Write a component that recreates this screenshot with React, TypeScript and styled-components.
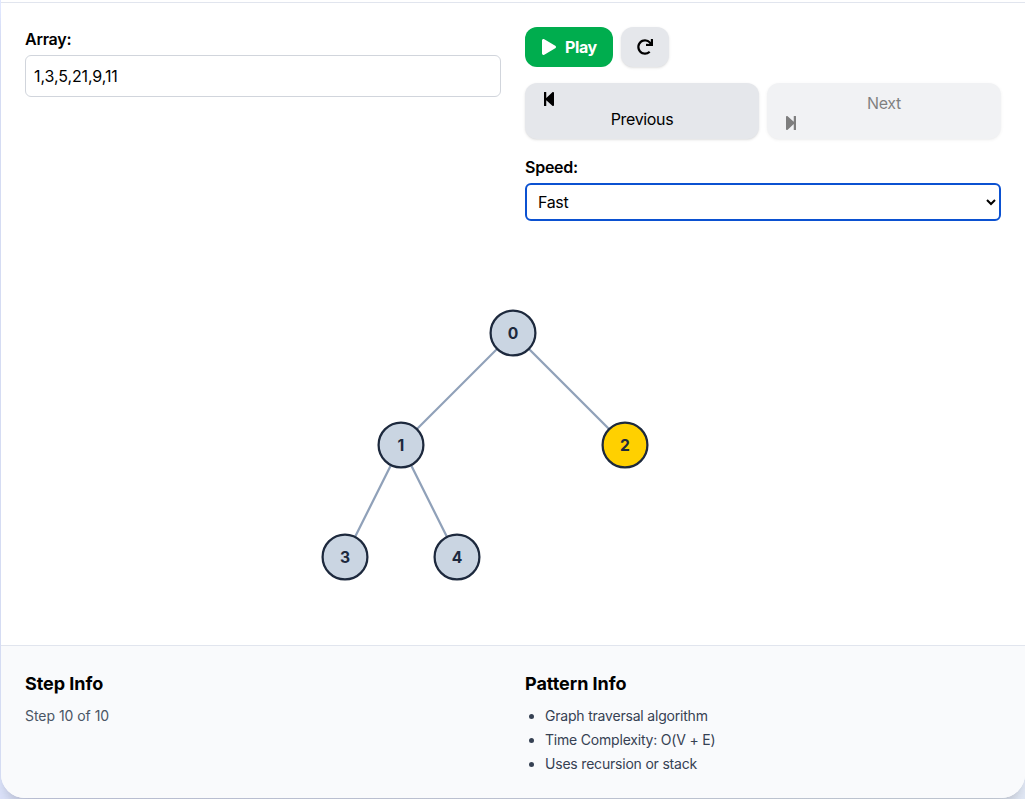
import React from "react";
import styled, { createGlobalStyle, css } from "styled-components";
import { FaPlay, FaRedo, FaStepBackward, FaStepForward } from "react-icons/fa";

const GlobalStyle = createGlobalStyle`
  *, *::before, *::after { box-sizing: border-box; }
  html, body { margin: 0; padding: 0; }
  body {
    overflow: hidden;
    background: linear-gradient(90deg, #e0e7ff, #e8effc);
    font-family: Inter, "Liberation Sans", sans-serif;
    font-size: 16px;
    line-height: 24px;
    color: #000;
  }
  svg { display: block; }
`;

const Page = styled.div`
  height: 799px;
  padding: 0 0 1px 1px;
  overflow: hidden;
`;

const Card = styled.main`
  display: flex;
  flex-direction: column;
  height: 798px;
  overflow: hidden;
  background: #fff;
  border-radius: 0 0 24px 24px;
  box-shadow: 0 20px 25px -5px rgba(0, 0, 0, 0.13), 0 8px 10px -6px rgba(0, 0, 0, 0.12);
`;

const HeaderEdge = styled.div`
  height: 3px;
  flex: none;
  border-bottom: 1px solid #e1e5ee;
`;

const Columns = styled.section`
  display: grid;
  grid-template-columns: 476px 476px;
  column-gap: 24px;
  padding: 24px;
`;

const Field = styled.div`
  display: flex;
  flex-direction: column;
  gap: 4px;
`;

const Label = styled.label`
  font-weight: 600;
  letter-spacing: -0.25px;
`;

const ArrayInput = styled.input`
  width: 100%;
  height: 42px;
  padding: 8px;
  border: 1px solid #d1d5dc;
  border-radius: 6px;
  background: #fff;
  font: inherit;
  letter-spacing: -0.1px;
  color: inherit;
  outline: none;
`;

const Controls = styled.div`
  display: flex;
  flex-direction: column;
  gap: 16px;
`;

const ButtonRow = styled.div`
  display: flex;
  gap: 8px;
`;

const Button = styled.button<{ $primary?: boolean; $wide?: boolean }>`
  display: flex;
  align-items: center;
  gap: 8px;
  padding: 8px 16px;
  min-height: 40px;
  border: 0;
  border-radius: 12px;
  font: inherit;
  color: #000;
  background: #e5e7eb;
  box-shadow: 0 1px 3px rgba(0, 0, 0, 0.1), 0 1px 2px -1px rgba(0, 0, 0, 0.1);

  ${({ $primary }) =>
    $primary &&
    css`
      width: 88px;
      color: #fff;
      font-weight: 700;
      letter-spacing: -0.4px;
      background: #00ad4e;
      box-shadow: none;
    `}

  ${({ $wide }) =>
    $wide &&
    css`
      flex: 1;
      flex-direction: column;
      align-items: stretch;
      gap: 0;
      text-align: center;
      letter-spacing: -0.35px;
    `}

  &:disabled {
    color: #000;
    opacity: 0.5;
  }
`;

const SpeedSelect = styled.select`
  width: 100%;
  height: 38px;
  padding: 4px 4px 4px 7px;
  border: 2px solid #0b51d1;
  border-radius: 6px;
  background: #fff;
  font: inherit;
  letter-spacing: -0.35px;
  color: #000;
  outline: none;
`;

const Stage = styled.section`
  flex: 1;
  display: flex;
  justify-content: center;
  min-height: 0;
`;

const NodeCircle = styled.circle<{ $active: boolean }>`
  fill: ${({ $active }) => ($active ? "#ffd000" : "#cad5e2")};
  stroke: #1d293d;
  stroke-width: 2.24;
`;

const NodeLabel = styled.text`
  fill: #1d293d;
  font-size: 15.7px;
  font-weight: 700;
  text-anchor: middle;
`;

const Edge = styled.line`
  stroke: #90a1b9;
  stroke-width: 2.24;
`;

const Footer = styled(Columns)`
  height: 153px;
  flex: none;
  border-top: 1px solid #e1e5ee;
  background: #f9fafc;
`;

const Heading = styled.h3`
  margin: 0 0 8px;
  font-size: 18px;
  line-height: 28px;
  font-weight: 700;
  letter-spacing: -0.05px;
`;

const StepText = styled.p`
  margin: 0;
  font-size: 14px;
  line-height: 20px;
  letter-spacing: -0.04px;
  color: #4a5565;
`;

const FactList = styled.ul`
  margin: 0;
  padding-left: 20px;
  display: flex;
  flex-direction: column;
  gap: 4px;
  font-size: 14px;
  line-height: 20px;
  letter-spacing: -0.2px;
  color: #364153;
`;

const nodes = [
  { x: 513, y: 333 },
  { x: 401, y: 445 },
  { x: 625, y: 445 },
  { x: 345, y: 557 },
  { x: 457, y: 557 },
];
const edges = [[0, 1], [0, 2], [1, 3], [1, 4]];
const facts = ["Graph traversal algorithm", "Time Complexity: O(V + E)", "Uses recursion or stack"];

function Tree({ active }: { active: number }) {
  return (
    <svg width="976" height="376" viewBox="25 245 976 376">
      {edges.map(([a, b]) => (
        <Edge key={`${a}-${b}`} x1={nodes[a].x} y1={nodes[a].y} x2={nodes[b].x} y2={nodes[b].y} />
      ))}
      {nodes.map(({ x, y }, i) => (
        <g key={i}>
          <NodeCircle $active={i === active} cx={x} cy={y} r={22.4} />
          <NodeLabel x={x} y={y + 5.6}>{i}</NodeLabel>
        </g>
      ))}
    </svg>
  );
}

export default function App() {
  return (
    <Page>
      <GlobalStyle />
      <Card>
        <HeaderEdge />
        <Columns>
          <Field>
            <Label htmlFor="array">Array:</Label>
            <ArrayInput id="array" defaultValue="1,3,5,21,9,11" />
          </Field>
          <Controls>
            <ButtonRow>
              <Button $primary><FaPlay />Play</Button>
              <Button aria-label="Reset"><FaRedo /></Button>
            </ButtonRow>
            <ButtonRow>
              <Button $wide><FaStepBackward />Previous</Button>
              <Button $wide disabled>Next<FaStepForward /></Button>
            </ButtonRow>
            <Field>
              <Label htmlFor="speed">Speed:</Label>
              <SpeedSelect id="speed" defaultValue="fast">
                <option value="fast">Fast</option>
              </SpeedSelect>
            </Field>
          </Controls>
        </Columns>
        <Stage><Tree active={2} /></Stage>
        <Footer>
          <div>
            <Heading>Step Info</Heading>
            <StepText>Step 10 of 10</StepText>
          </div>
          <div>
            <Heading>Pattern Info</Heading>
            <FactList>{facts.map((fact) => <li key={fact}>{fact}</li>)}</FactList>
          </div>
        </Footer>
      </Card>
    </Page>
  );
}
